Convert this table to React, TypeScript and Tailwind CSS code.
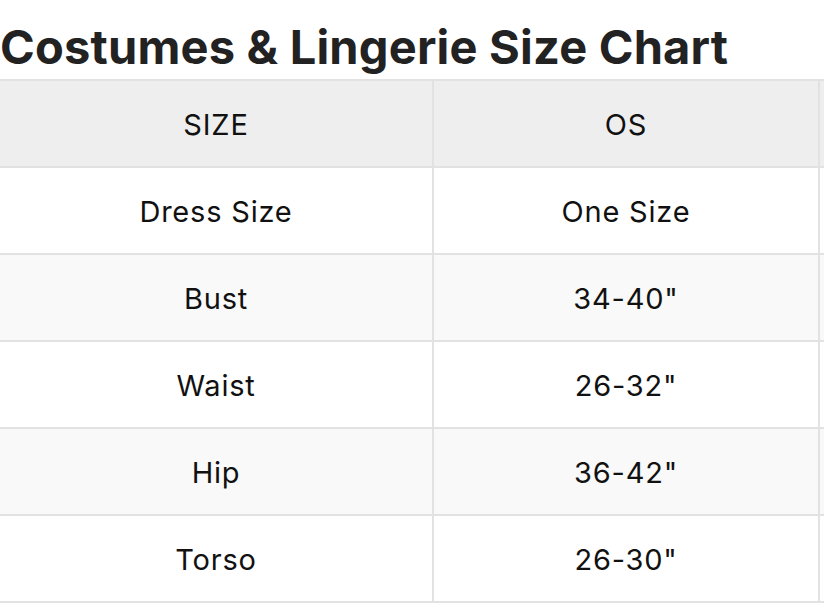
const rows = [
    { label: "Dress Size", value: "One Size" },
    { label: "Bust", value: "34-40\"" },
    { label: "Waist", value: "26-32\"" },
    { label: "Hip", value: "36-42\"" },
    { label: "Torso", value: "26-30\"" },
]

const Cell = ({ children, last }: { children?: React.ReactNode; last?: boolean }) => (
    <div
        className={
            "flex h-[87px] items-center justify-center border-b-2 border-[#e2e2e2] pt-[2px] " +
            (last ? "" : "border-r-2")
        }
    >
        {children}
    </div>
)

export default function App() {
    return (
        <div className="h-[606px] w-[824px] overflow-hidden bg-white font-['Inter',sans-serif] text-[#111]">
            <h1 className="h-[79px] pt-[18px] text-[47px] leading-[58px] font-bold tracking-[0.2px] text-[#222]">
                Costumes &amp; Lingerie Size Chart
            </h1>
            <div className="grid w-[900px] grid-cols-[434px_386px_80px] border-t-2 border-[#e2e2e2] text-[29px] tracking-[0.8px]">
                <div className="bg-[#eeeeee]">
                    <Cell>SIZE</Cell>
                </div>
                <div className="bg-[#eeeeee]">
                    <Cell>OS</Cell>
                </div>
                <div className="bg-[#eeeeee]">
                    <Cell last />
                </div>
                {rows.map((r, i) => {
                    const bg = i % 2 === 1 ? "bg-[#f9f9f9]" : "bg-white"
                    return (
                        <div key={r.label} className="contents">
                            <div className={bg}>
                                <Cell>{r.label}</Cell>
                            </div>
                            <div className={bg}>
                                <Cell>{r.value}</Cell>
                            </div>
                            <div className={bg}>
                                <Cell last />
                            </div>
                        </div>
                    )
                })}
            </div>
        </div>
    )
}
